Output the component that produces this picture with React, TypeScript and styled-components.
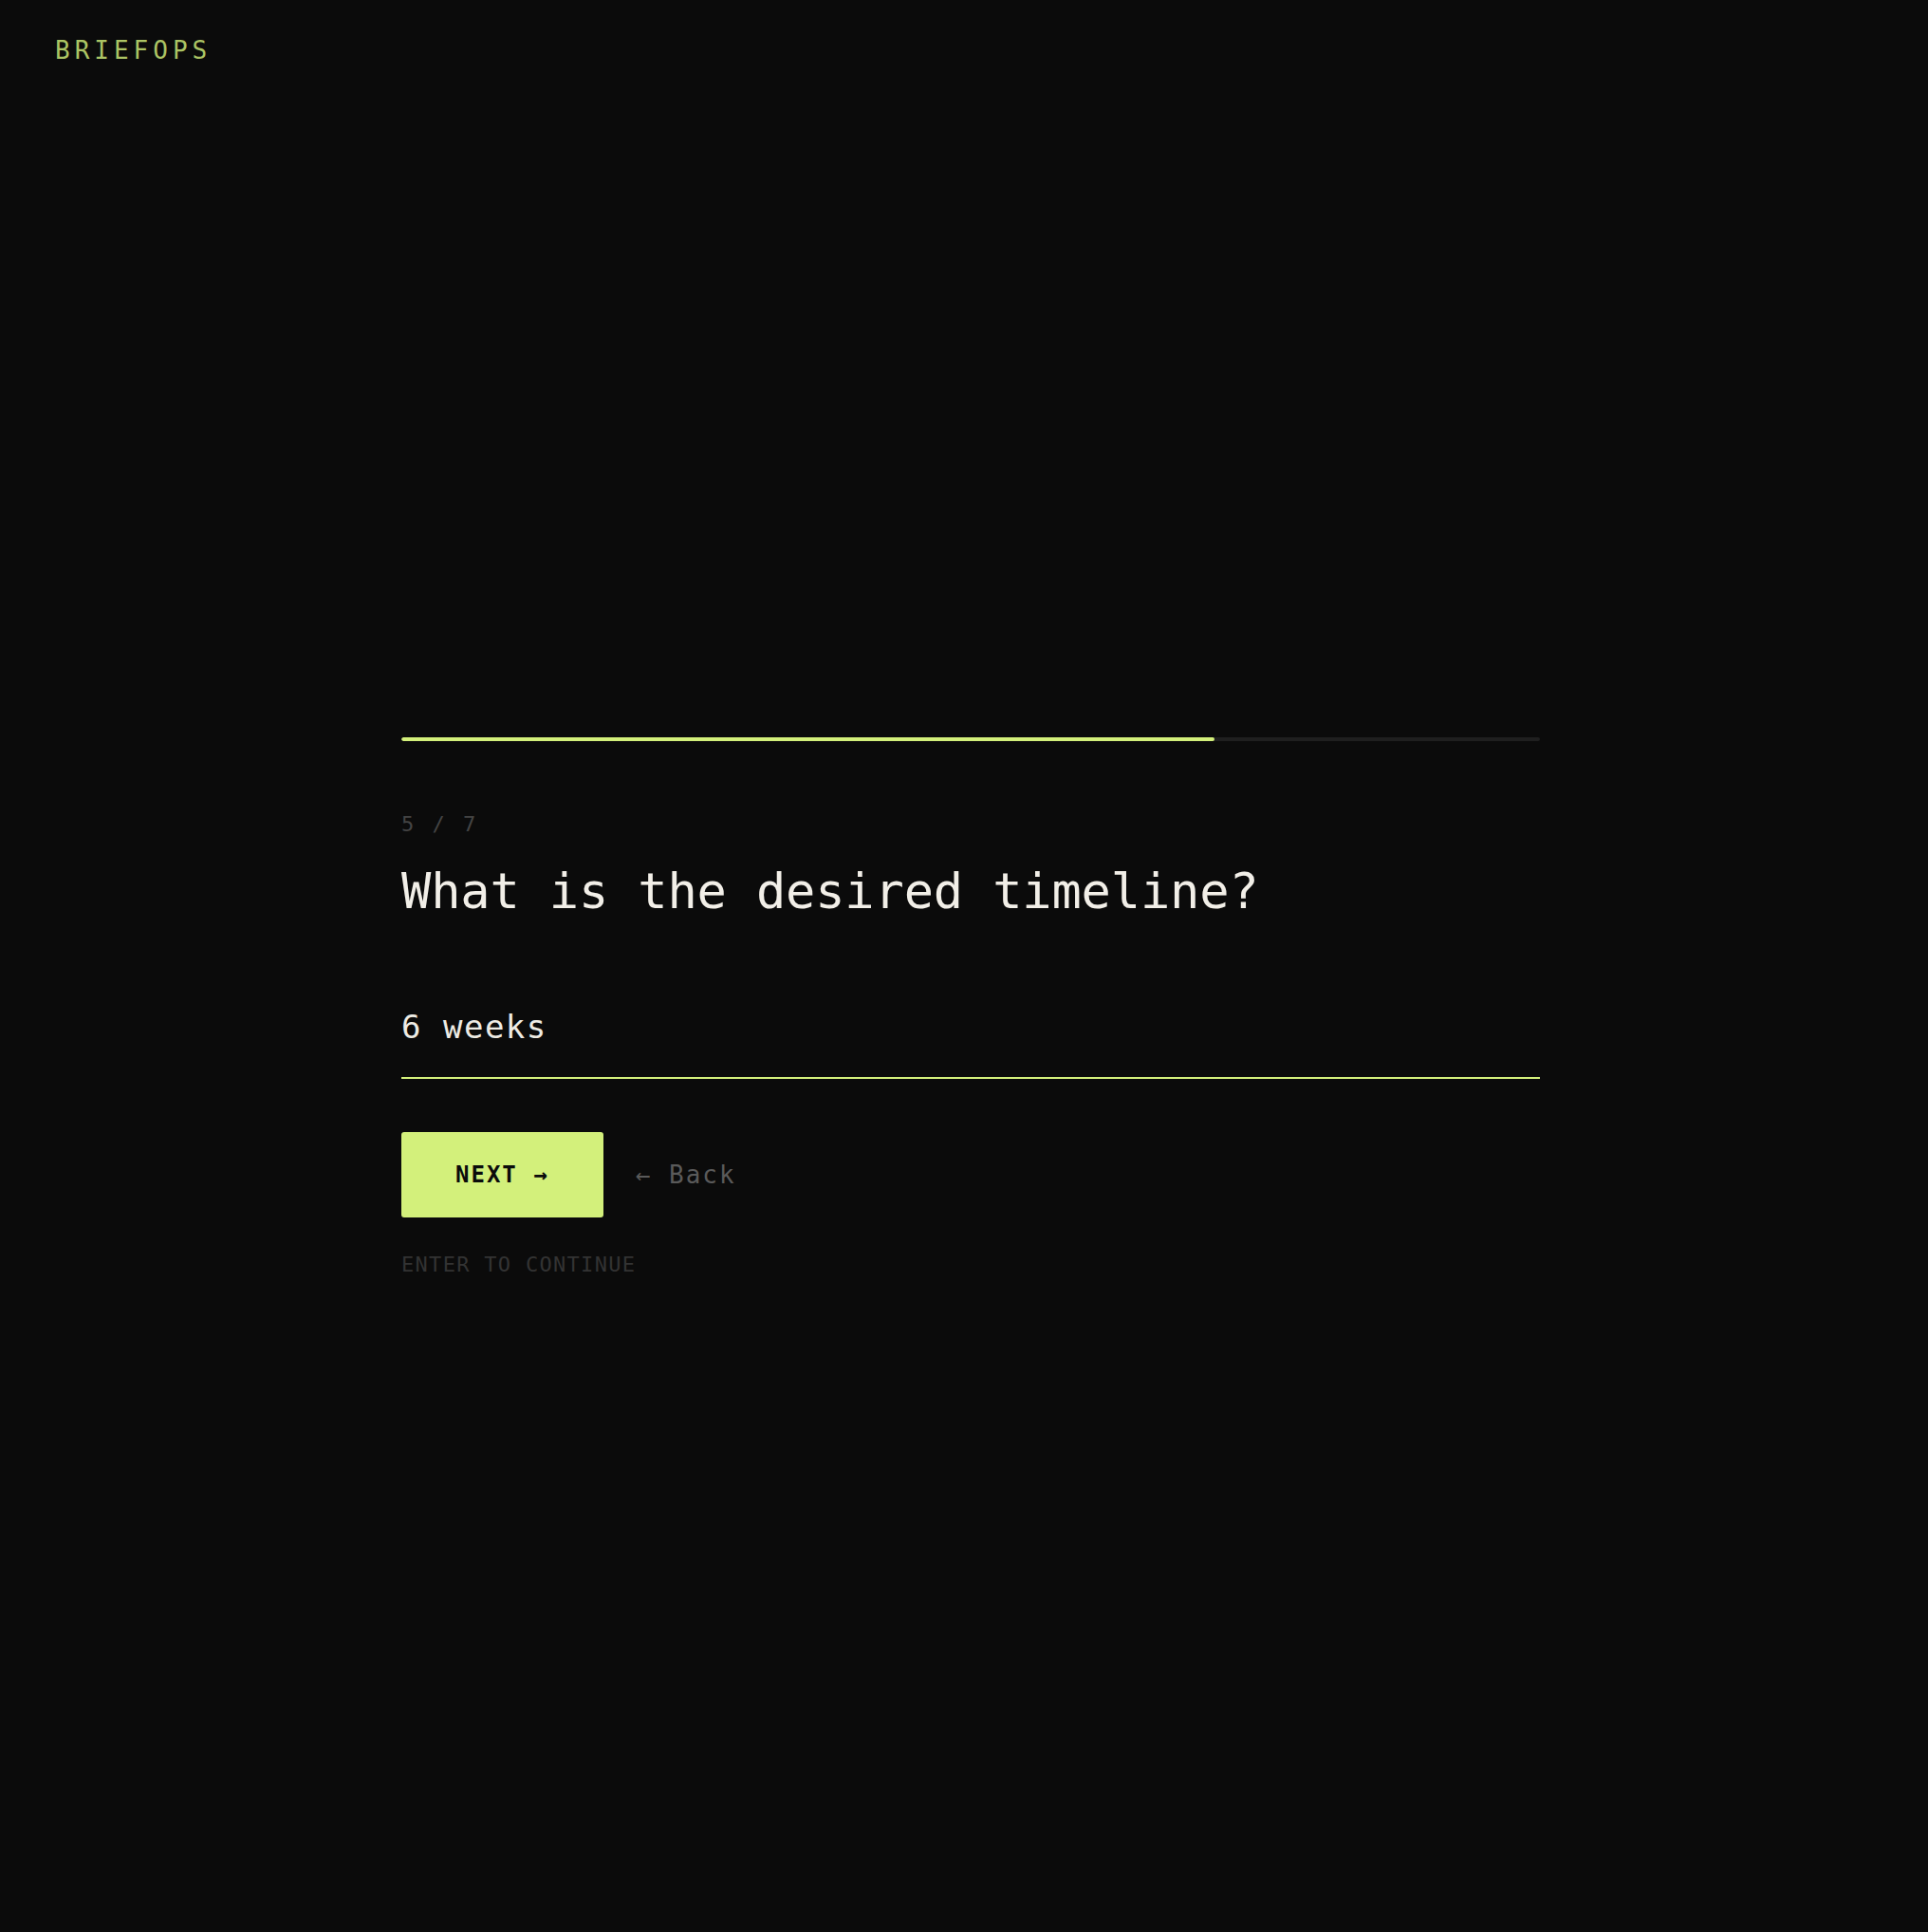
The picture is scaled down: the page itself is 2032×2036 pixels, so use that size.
import React from "react"
import styled, { createGlobalStyle } from "styled-components"

const lime = "#d3f07b"
const mono = `"DejaVu Sans Mono", "Liberation Mono", monospace`

const GlobalStyle = createGlobalStyle`
    html, body {
        margin: 0;
        padding: 0;
        background: #0b0b0b;
    }
    * {
        box-sizing: border-box;
    }
`

const steps = 7
const current = 5

export default function App() {
    return (
        <>
            <GlobalStyle/>
            <Page>
                <Header>
                    <Logo>BRIEFOPS</Logo>
                </Header>
                <Main>
                    <Form>
                        <Track>
                            <Fill style={{ width: `${(current / steps) * 100}%` }}/>
                        </Track>
                        <StepLabel>{current} / {steps}</StepLabel>
                        <Question>What is the desired timeline?</Question>
                        <Answer defaultValue="6 weeks" spellCheck={false}/>
                        <Actions>
                            <NextButton>NEXT →</NextButton>
                            <BackButton>← Back</BackButton>
                        </Actions>
                        <Hint>ENTER TO CONTINUE</Hint>
                    </Form>
                </Main>
            </Page>
        </>
    )
}

const Page = styled.div`
    min-height: 100vh;
    display: flex;
    flex-direction: column;
    background: #0b0b0b;
    font-family: ${mono};
`
const Header = styled.header`
    padding: 38px 58px 0;
`
const Logo = styled.div`
    font-size: 26px;
    line-height: 30px;
    letter-spacing: 5px;
    color: #abc464;
`
const Main = styled.main`
    flex: 1;
    display: flex;
    align-items: center;
    justify-content: center;
    padding: 18px 0 0 14px;
`
const Form = styled.section`
    width: 1200px;
    display: flex;
    flex-direction: column;
`
const Track = styled.div`
    height: 4px;
    border-radius: 2px;
    background: #1f1f1f;
    overflow: hidden;
`
const Fill = styled.div`
    height: 100%;
    background: ${lime};
    border-radius: 2px;
`
const StepLabel = styled.div`
    margin-top: 75px;
    font-size: 22px;
    line-height: 26px;
    letter-spacing: 3px;
    color: #444444;
`
const Question = styled.h1`
    margin: 26px 0 0;
    font-size: 52px;
    line-height: 62px;
    font-weight: 400;
    letter-spacing: -0.15px;
    color: #f2efe8;
`
const Answer = styled.input`
    margin-top: 92px;
    width: 100%;
    height: 75px;
    padding: 0 0 33px 0;
    font-family: ${mono};
    font-size: 34px;
    line-height: 40px;
    letter-spacing: 1.5px;
    color: #eeebe4;
    background: transparent;
    border: none;
    border-bottom: 2px solid ${lime};
    outline: none;
    box-sizing: border-box;
`
const Actions = styled.div`
    margin-top: 56px;
    display: flex;
    align-items: center;
    gap: 34px;
`
const NextButton = styled.button`
    height: 90px;
    padding: 0 57px;
    border: none;
    border-radius: 3px;
    background: ${lime};
    color: #0b0b0b;
    font-family: ${mono};
    font-size: 24px;
    font-weight: 700;
    letter-spacing: 2px;
    cursor: pointer;
`
const BackButton = styled.button`
    padding: 0;
    border: none;
    background: none;
    color: #5a5a5a;
    font-family: ${mono};
    font-size: 26px;
    letter-spacing: 2px;
    cursor: pointer;
`
const Hint = styled.div`
    margin-top: 37px;
    font-size: 22px;
    line-height: 25px;
    letter-spacing: 1.3px;
    color: #333333;
`
